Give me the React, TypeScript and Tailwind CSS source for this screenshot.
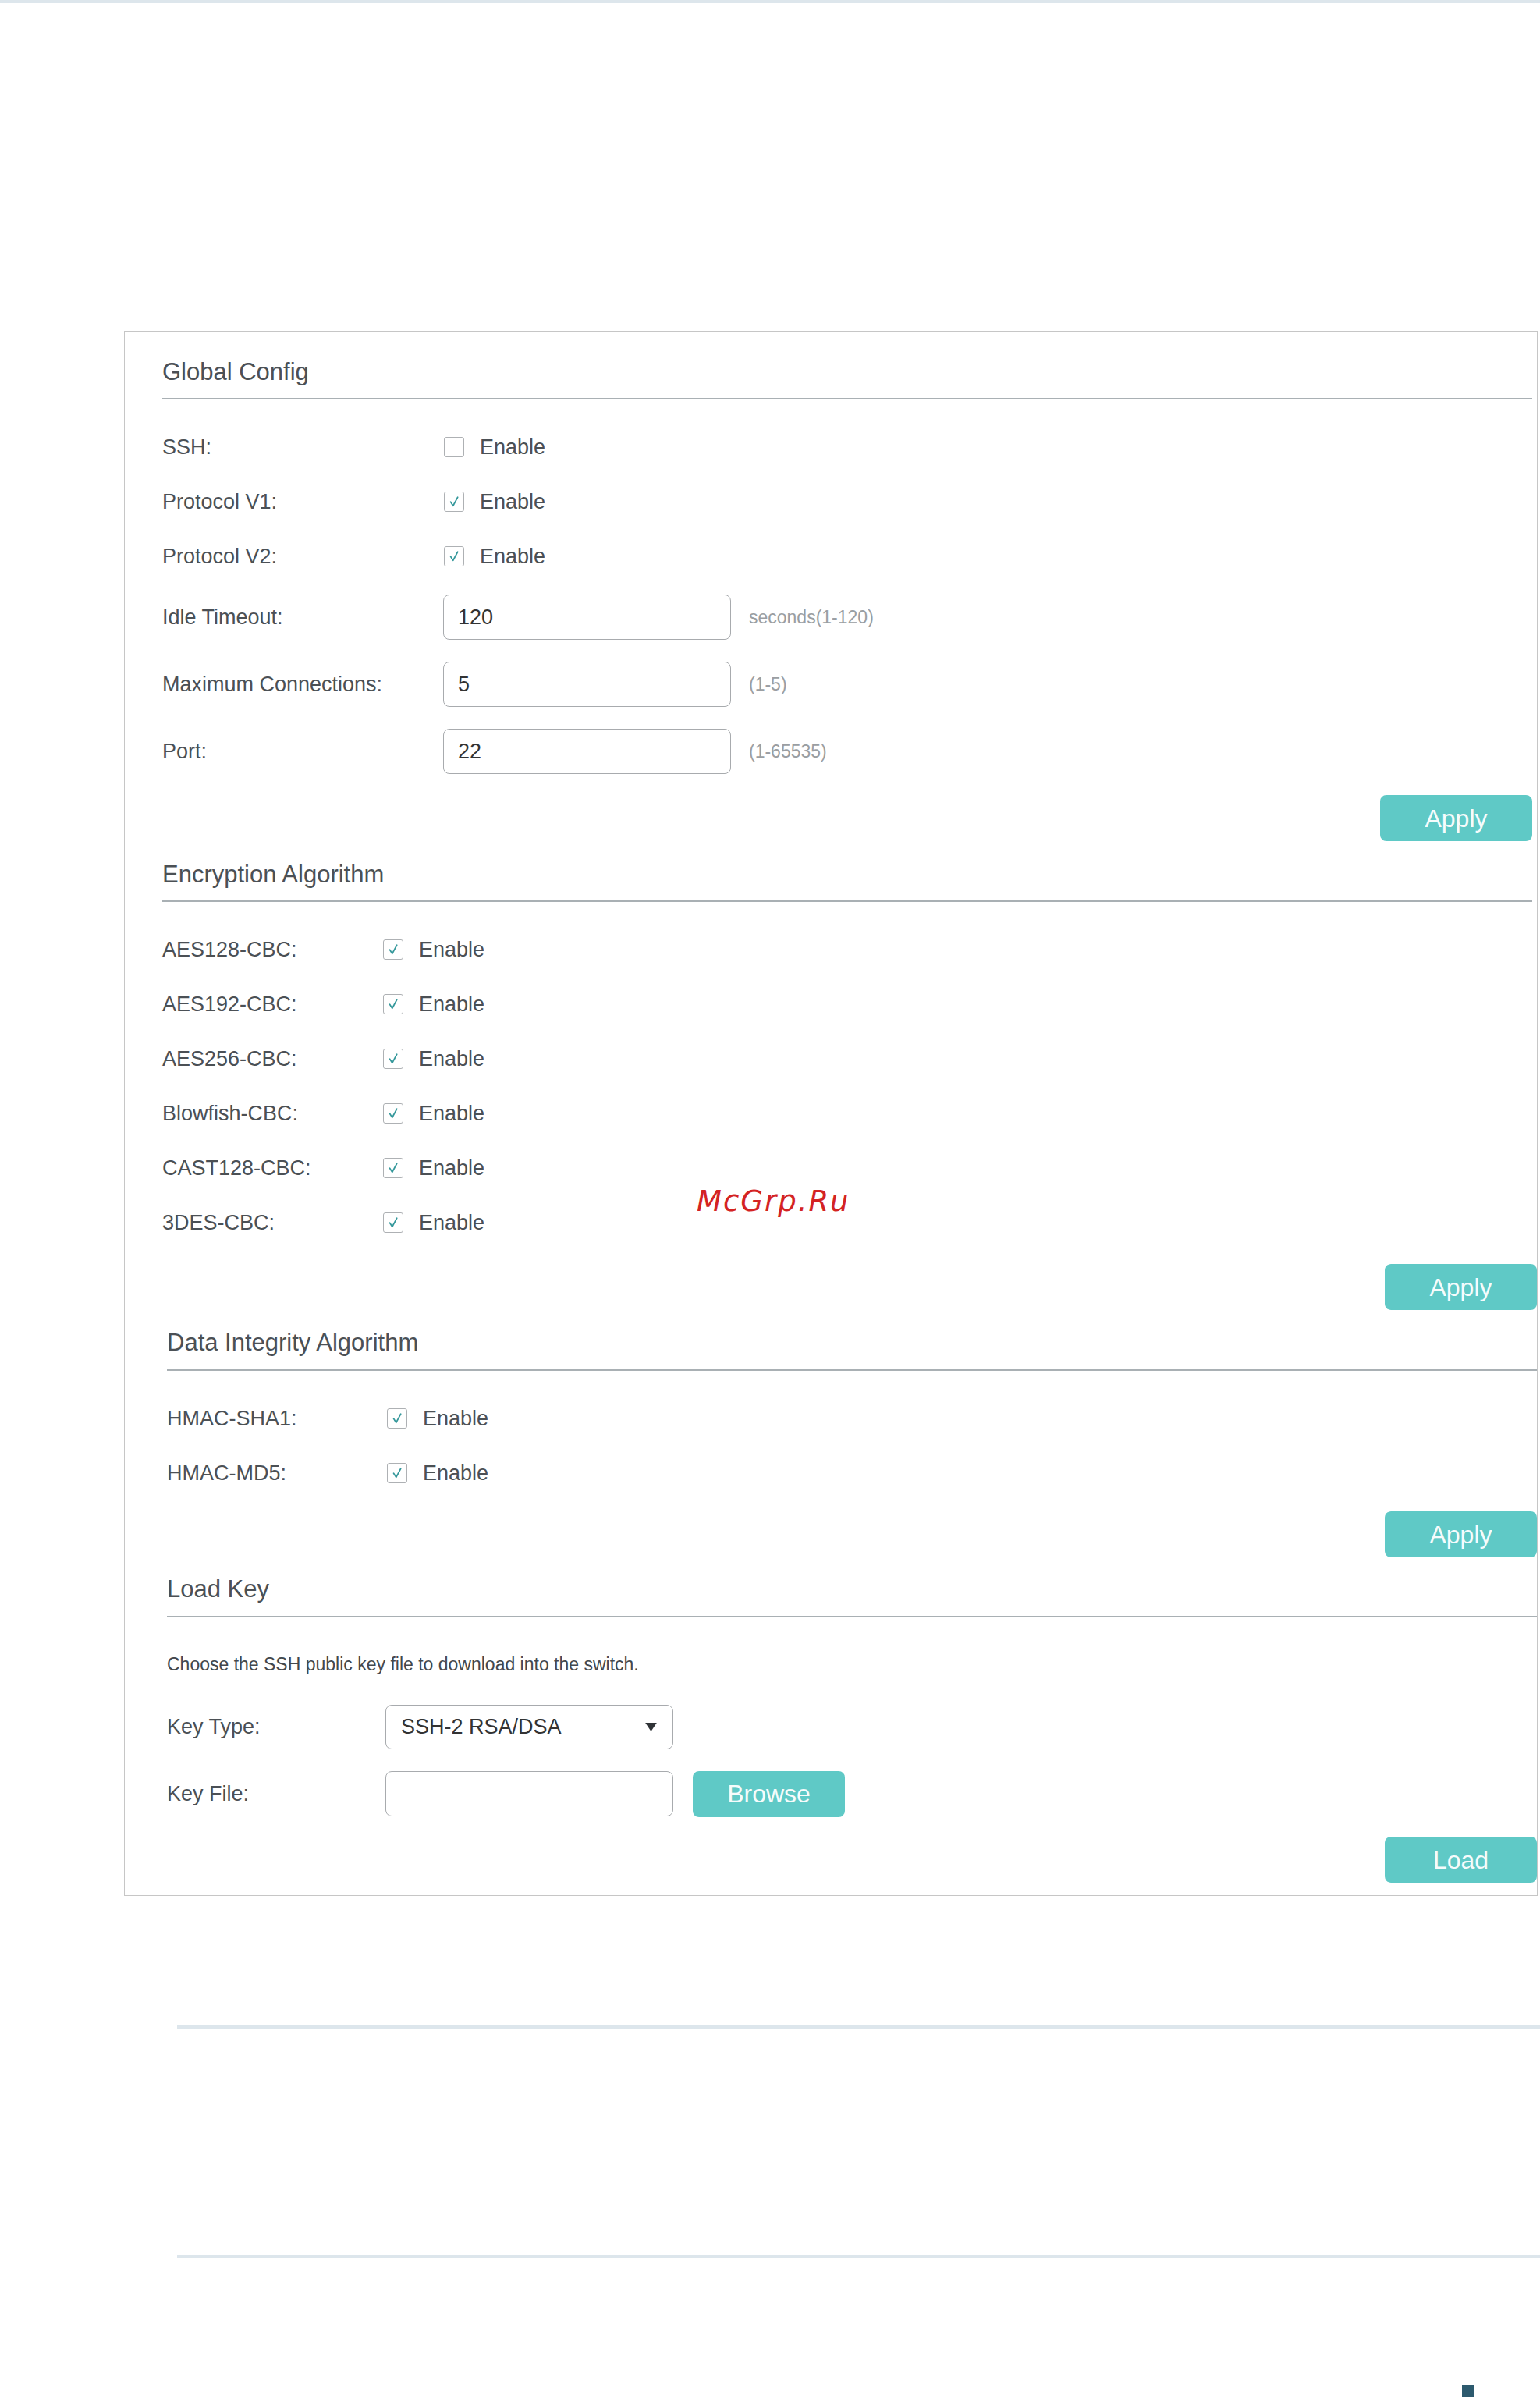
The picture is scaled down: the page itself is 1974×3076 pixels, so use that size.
import React from 'react'

const CheckMark = () => (
  <span className="flex h-[26px] w-[26px] items-center justify-center rounded-[3px] border border-[#aeb1b4] bg-white">
    <svg viewBox="0 0 16 16" className="h-[22px] w-[22px]" fill="none">
      <path d="M4.8 8.2 L7.1 11.8 L11.4 3.8" stroke="#35989b" strokeWidth="1.25" strokeLinecap="round" strokeLinejoin="round" />
    </svg>
  </span>
)

const EmptyBox = () => (
  <span className="h-[26px] w-[26px] rounded-[3px] border border-[#aeb1b4] bg-white" />
)

const Heading = ({ title, gap = 'mt-[15px]' }: { title: string; gap?: string }) => (
  <>
    <h2 className="h-[36px] text-[31px] leading-[36px] text-[#4b5055]">{title}</h2>
    <div className={`${gap} h-[2px] bg-[#a9b0b4]`} />
  </>
)

const CheckRow = ({ label, labelW, checked = true }: { label: string; labelW: string; checked?: boolean }) => (
  <div className="flex h-[70px] items-center text-[27px] text-[#4b5055]">
    <span className={labelW}>{label}</span>
    {checked ? <CheckMark /> : <EmptyBox />}
    <span className="ml-[20px]">Enable</span>
  </div>
)

const InputRow = ({ label, value, hint }: { label: string; value: string; hint: string }) => (
  <div className="flex h-[86px] items-center text-[27px] text-[#4b5055]">
    <span className="w-[360px]">{label}</span>
    <input
      readOnly
      value={value}
      className="h-[58px] w-[369px] rounded-[8px] border border-[#a8abae] bg-white pl-[18px] text-[27px] text-[#333] outline-none"
    />
    <span className="ml-[23px] text-[23px] text-[#9a9ea2]">{hint}</span>
  </div>
)

const TealButton = ({ label, className = '' }: { label: string; className?: string }) => (
  <button className={`h-[59px] w-[195px] rounded-[8px] bg-[#5fc9c6] text-[32px] text-[#f6fcfc] ${className}`}>
    {label}
  </button>
)

export default function App() {
  return (
    <div className="relative min-h-[3076px] w-[1974px] bg-white font-['Liberation_Sans',Arial,sans-serif]">
      <div className="h-[4px] bg-[#dde6ec]" />

      <div className="ml-[159px] mt-[420px] w-[1812px] border border-[#c6c6c6] pb-[16px]">
        {/* global config + encryption */}
        <div className="flex flex-col pl-[48px] pr-[6px] pt-[34px]">
          <Heading title="Global Config" />
          <div className="mt-[26px]">
            <CheckRow label="SSH:" labelW="w-[361px]" checked={false} />
            <CheckRow label="Protocol V1:" labelW="w-[361px]" />
            <CheckRow label="Protocol V2:" labelW="w-[361px]" />
            <InputRow label="Idle Timeout:" value="120" hint="seconds(1-120)" />
            <InputRow label="Maximum Connections:" value="5" hint="(1-5)" />
            <InputRow label="Port:" value="22" hint="(1-65535)" />
          </div>
          <TealButton label="Apply" className="mt-[13px] self-end" />

          <div className="mt-[25px]">
            <Heading title="Encryption Algorithm" />
          </div>
          <div className="mt-[26px]">
            {['AES128-CBC:', 'AES192-CBC:', 'AES256-CBC:', 'Blowfish-CBC:', 'CAST128-CBC:', '3DES-CBC:'].map((a) => (
              <CheckRow key={a} label={a} labelW="w-[283px]" />
            ))}
          </div>
        </div>

        {/* data integrity + load key */}
        <div className="flex flex-col pl-[54px]">
          <TealButton label="Apply" className="mt-[18px] self-end" />

          <div className="mt-[24px]">
            <Heading title="Data Integrity Algorithm" gap="mt-[16px]" />
          </div>
          <div className="mt-[26px]">
            <CheckRow label="HMAC-SHA1:" labelW="w-[282px]" />
            <CheckRow label="HMAC-MD5:" labelW="w-[282px]" />
          </div>
          <TealButton label="Apply" className="mt-[14px] self-end" />

          <div className="mt-[23px]">
            <Heading title="Load Key" gap="mt-[16px]" />
          </div>
          <p className="mt-[45px] text-[23px] leading-[30px] text-[#43484d]">
            Choose the SSH public key file to download into the switch.
          </p>
          <div className="mt-[22px] text-[27px] text-[#4b5055]">
            <div className="flex h-[86px] items-center">
              <span className="w-[280px]">Key Type:</span>
              <div className="flex h-[57px] w-[369px] items-center justify-between rounded-[8px] border border-[#a8abae] pl-[19px] pr-[20px] text-[#333]">
                <span>SSH-2 RSA/DSA</span>
                <svg viewBox="0 0 16 12" className="h-[11px] w-[15px]">
                  <path d="M0 0 H16 L8 12 Z" fill="#2f3336" />
                </svg>
              </div>
            </div>
            <div className="flex h-[86px] items-center">
              <span className="w-[280px]">Key File:</span>
              <input
                readOnly
                className="h-[58px] w-[369px] rounded-[8px] border border-[#a8abae] bg-white outline-none"
              />
              <TealButton label="Browse" className="ml-[25px] h-[58px]" />
            </div>
          </div>
          <TealButton label="Load" className="mt-[12px] self-end" />
        </div>
      </div>

      <div className="ml-[227px] mt-[166px] h-[4px] bg-[#dde6ec]" />
      <div className="ml-[227px] mt-[290px] h-[4px] bg-[#dde6ec]" />
      <div className="ml-[1874px] mt-[163px] h-[15px] w-[15px] bg-[#2d5a6e]" />

      <span className="absolute left-[893px] top-[1521px] text-[37px] italic leading-[37px] tracking-[2px] text-[#d42323] font-['DejaVu_Sans',sans-serif]">
        McGrp.Ru
      </span>
    </div>
  )
}
